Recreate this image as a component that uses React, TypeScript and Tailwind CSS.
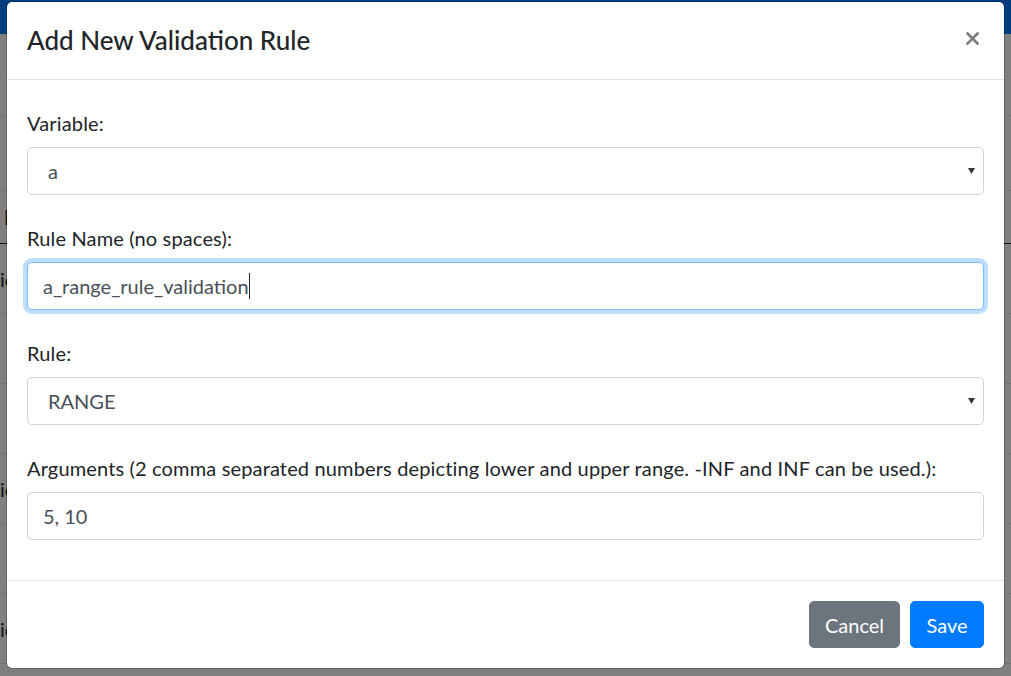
import React from 'react';

const rows = [true, false, false, true, false, true];

const FieldLabel: React.FC<{ children: React.ReactNode }> = ({ children }) => (
    <label className="mb-[9px] block h-[30px] whitespace-nowrap text-[20px] leading-[30px] tracking-[0.15px] text-[#212529]">
        {children}
    </label>
);

const FakeSelect: React.FC<{ value: string }> = ({ value }) => (
    <div className="flex h-[48px] items-center justify-between rounded-[5px] border border-[#ced4da] bg-white pl-[20px] pr-[8px] text-[20px] text-[#495057]">
        <span>{value}</span>
        <svg width="7" height="6" viewBox="0 0 7 6">
            <path d="M0 0h7L3.5 6z" fill="#343a40" />
        </svg>
    </div>
);

const App: React.FC = () => {
    return (
        <div className="relative h-[676px] w-[1011px] overflow-hidden bg-white font-['Lato','Noto_Sans',sans-serif]">
            {/* page behind the modal */}
            <div className="h-[34px] bg-[#007bff]" />
            <div className="h-[82px] border-b border-[#dee2e6]" />
            <div className="h-[75px] border-b border-[#dee2e6]" />
            <div className="flex h-[53px] items-center border-b border-[#212529] pl-[4px] text-[20px] font-bold text-[#212529]">
                I
            </div>
            {rows.map((hasText, i) => (
                <div key={i} className="flex h-[70px] items-center border-b border-[#dee2e6] text-[20px] text-[#212529]">
                    {hasText && <span>ic</span>}
                </div>
            ))}

            <div className="absolute inset-0 bg-black/50" />

            {/* modal */}
            <div className="absolute left-[6px] top-[1px] w-[999px] rounded-[6px] border border-black/20 bg-white bg-clip-padding">
                <div className="flex items-start justify-between border-b border-[#dee2e6] p-[20px]">
                    <h5 className="text-[26px] font-medium leading-[37px] text-[#212529]">Add New Validation Rule</h5>
                    <button className="mr-[5px] mt-[10px]" aria-label="Close">
                        <svg width="13" height="13" viewBox="0 0 13 13">
                            <path d="M1.5 1.5l10 10M11.5 1.5l-10 10" stroke="#7a7a7a" strokeWidth="2.6" strokeLinecap="square" />
                        </svg>
                    </button>
                </div>

                <div className="px-[20px] pb-[12px] pt-[28px]">
                    <div className="mb-[28px]">
                        <FieldLabel>Variable:</FieldLabel>
                        <FakeSelect value="a" />
                    </div>
                    <div className="mb-[28px]">
                        <FieldLabel>Rule Name (no spaces):</FieldLabel>
                        <div className="flex h-[48px] items-center rounded-[5px] border border-[#80bdff] bg-white pl-[15px] text-[20px] text-[#495057] shadow-[0_0_0_4px_rgba(0,123,255,0.25)]">
                            <span>a_range_rule_validation</span>
                            <span className="h-[26px] w-px bg-[#212529]" />
                        </div>
                    </div>
                    <div className="mb-[28px]">
                        <FieldLabel>Rule:</FieldLabel>
                        <FakeSelect value="RANGE" />
                    </div>
                    <div className="mb-[28px]">
                        <FieldLabel>
                            Arguments (2 comma separated numbers depicting lower and upper range. -INF and INF can be used.):
                        </FieldLabel>
                        <div className="flex h-[48px] items-center rounded-[5px] border border-[#ced4da] bg-white pl-[15px] text-[20px] text-[#495057]">
                            5, 10
                        </div>
                    </div>
                </div>

                <div className="flex justify-end gap-[10px] border-t border-[#dee2e6] p-[20px]">
                    <button className="h-[47px] w-[91px] rounded-[5px] border border-[#6c757d] bg-[#6c757d] text-[20px] text-white">
                        Cancel
                    </button>
                    <button className="h-[47px] w-[74px] rounded-[5px] border border-[#007bff] bg-[#007bff] text-[20px] text-white">
                        Save
                    </button>
                </div>
            </div>
        </div>
    );
};

export default App;
